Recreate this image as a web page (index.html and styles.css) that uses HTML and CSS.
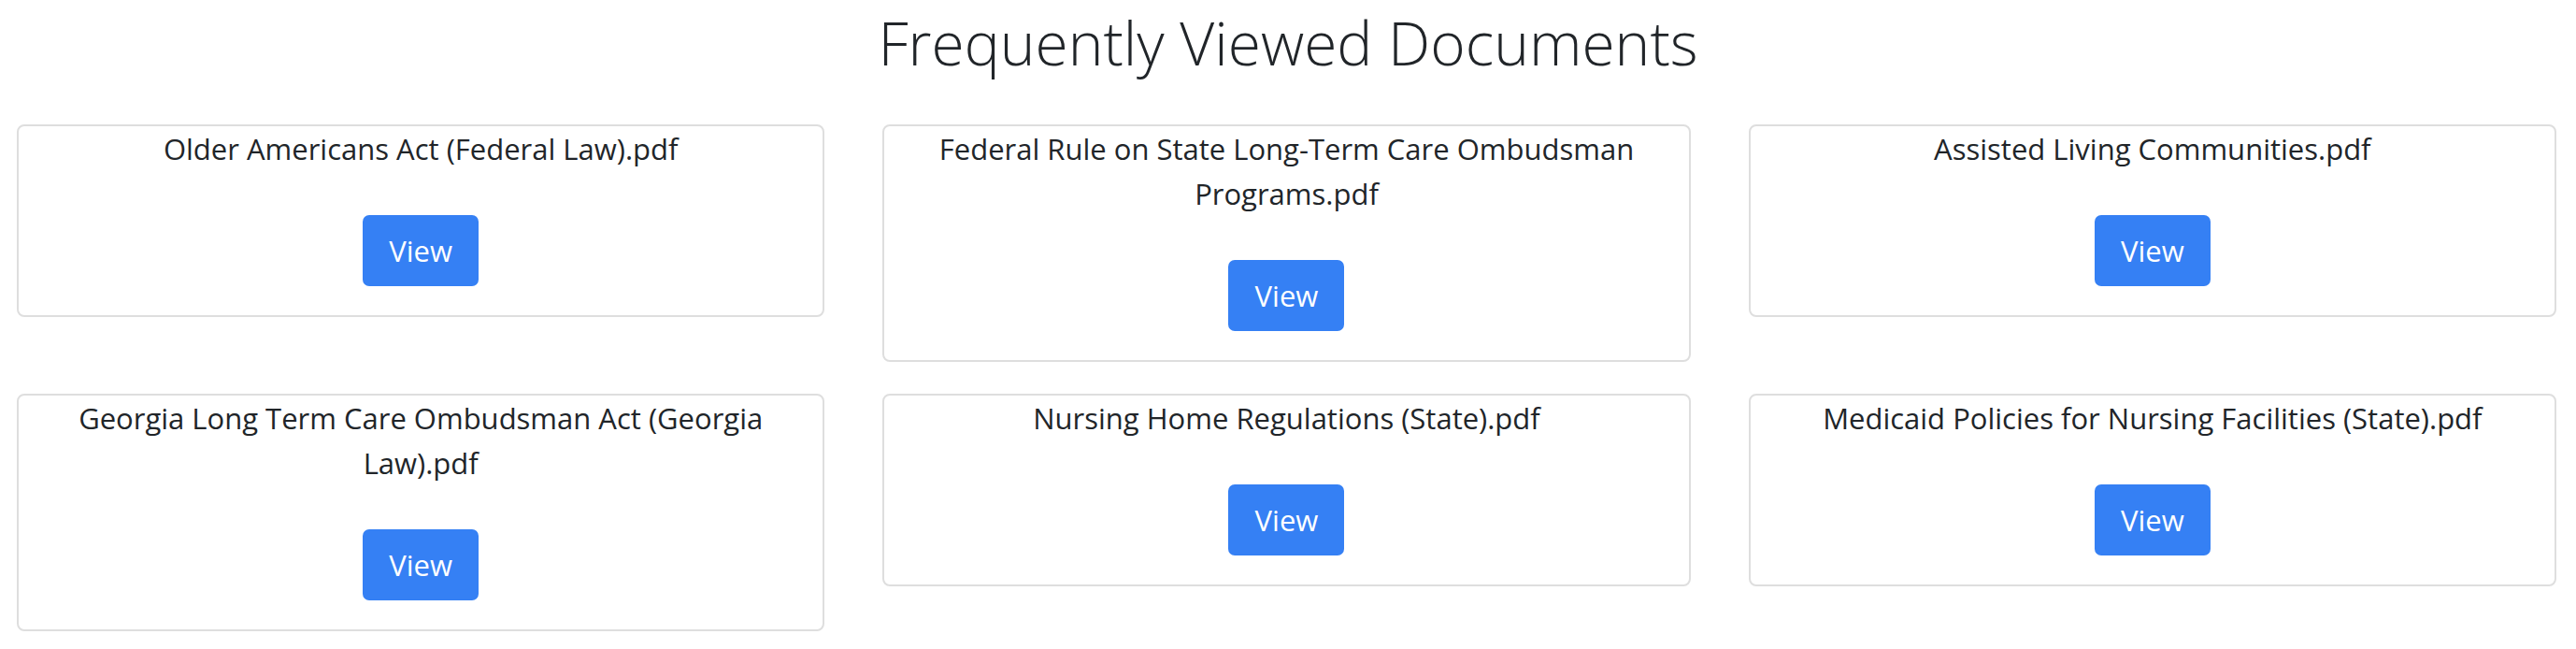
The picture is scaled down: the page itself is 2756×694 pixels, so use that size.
FILE: index.html
```html
<!DOCTYPE html>
<html lang="en">
<head>
<meta charset="utf-8">
<title>Frequently Viewed Documents</title>
<link rel="stylesheet" href="styles.css">
</head>
<body>
<header class="page-head">
  <h1 class="page-title">Frequently Viewed Documents</h1>
</header>
<main class="doc-grid">
  <div class="doc-card">
    <p class="doc-name">Older Americans Act (Federal Law).pdf</p>
    <a class="btn-view" href="#">View</a>
  </div>
  <div class="doc-card">
    <p class="doc-name">Federal Rule on State Long-Term Care Ombudsman Programs.pdf</p>
    <a class="btn-view" href="#">View</a>
  </div>
  <div class="doc-card">
    <p class="doc-name">Assisted Living Communities.pdf</p>
    <a class="btn-view" href="#">View</a>
  </div>
  <div class="doc-card">
    <p class="doc-name">Georgia Long Term Care Ombudsman Act (Georgia Law).pdf</p>
    <a class="btn-view" href="#">View</a>
  </div>
  <div class="doc-card">
    <p class="doc-name">Nursing Home Regulations (State).pdf</p>
    <a class="btn-view" href="#">View</a>
  </div>
  <div class="doc-card">
    <p class="doc-name">Medicaid Policies for Nursing Facilities (State).pdf</p>
    <a class="btn-view" href="#">View</a>
  </div>
</main>
</body>
</html>
```
FILE: styles.css
```css
html, body {
  margin: 0;
  padding: 0;
  background: #ffffff;
}
body {
  font-family: "Open Sans", "Noto Sans", sans-serif;
  color: #212529;
}
.page-head {
  padding-top: 8px;
  text-align: center;
}
.page-title {
  margin: 0 0 49px;
  font-size: 64px;
  line-height: 76px;
  font-weight: 300;
  color: #212529;
}
.doc-grid {
  display: grid;
  grid-template-columns: repeat(3, 1fr);
  column-gap: 62px;
  row-gap: 34px;
  padding: 0 21px 0 18px;
  align-items: start;
}
.doc-card {
  border: 2px solid #dedede;
  border-radius: 8px;
  padding: 0 20px 31px;
  display: flex;
  flex-direction: column;
  align-items: center;
  text-align: center;
}
.doc-name {
  margin: 0 0 47px;
  font-size: 31px;
  line-height: 48px;
}
.btn-view {
  display: flex;
  align-items: center;
  justify-content: center;
  width: 124px;
  height: 76px;
  box-sizing: border-box;
  background: #3580f4;
  color: #ffffff;
  border-radius: 7px;
  font-size: 31px;
  text-decoration: none;
}
```
